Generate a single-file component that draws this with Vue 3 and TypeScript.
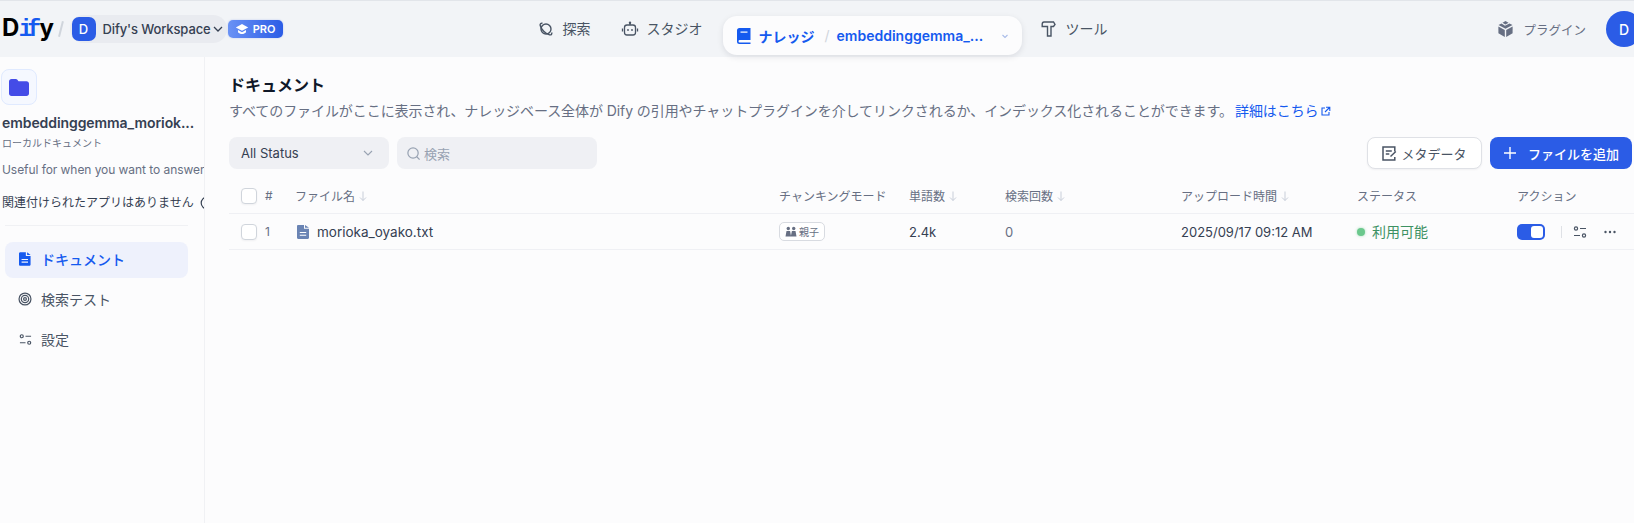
<script setup lang="ts">
interface Col { label: string; sort: boolean; width: number }
const columns: Col[] = [
  { label: 'チャンキングモード', sort: false, width: 130 },
  { label: '単語数', sort: true, width: 96 },
  { label: '検索回数', sort: true, width: 176 },
  { label: 'アップロード時間', sort: true, width: 176 },
  { label: 'ステータス', sort: false, width: 160 },
  { label: 'アクション', sort: false, width: 117 },
]
</script>

<template>
  <div class="page">
    <header class="top">
      <div class="left">
        <div class="logo">D<span class="if">if</span>y</div>
        <span class="slash"></span>
        <div class="ws">
          <span class="ws-av">D</span>
          <span class="ws-name">Dify's Workspace</span>
          <svg class="ws-chev" width="14" height="14" viewBox="0 0 14 14" fill="none"><path d="M3 5l4 4 4-4" stroke="#354052" stroke-width="1.3"/></svg>
        </div>
        <div class="pro">
          <svg width="14" height="14" viewBox="0 0 14 14" fill="#fff"><path d="M7 2 .8 5.4 7 8.8l6.2-3.4z"/><path d="M3 8v2.2C4 11.4 5.5 12 7 12s3-.6 4-1.8V8L7 10.2z"/></svg>
          <span>PRO</span>
        </div>
      </div>

      <nav class="nav">
        <a class="nav-item">
          <svg width="16" height="16" viewBox="0 0 16 16" fill="none" stroke="#495464" stroke-width="1.400"><circle cx="8" cy="8" r="5"/><path d="M4.500 2.300C2.800 2 1.800 2.800 2.200 4.500c.8 3.600 5.500 8.500 9.300 9.300 1.800.3 2.600-.6 2.200-2.300"/></svg>
          探索
        </a>
        <a class="nav-item studio">
          <svg width="18" height="18" viewBox="0 0 18 18" fill="none" stroke="#495464" stroke-width="1.3"><rect x="3.500" y="5" width="11" height="10" rx="2.500"/><circle cx="9" cy="2.800" r="1.200" fill="#495464" stroke="none"/><path d="M9 3v2M1.500 8.500v3M16.500 8.500v3"/><circle cx="7" cy="10" r=".9" fill="#495464" stroke="none"/><circle cx="11" cy="10" r=".9" fill="#495464" stroke="none"/></svg>
          スタジオ
        </a>
        <div class="pill">
          <svg width="14" height="16" viewBox="0 0 14 16" fill="#155aef"><path d="M2.500 0H13.500V12H2.800a1.300 1.300 0 0 0 0 2.600H13.500V16H2.500A2.500 2.500 0 0 1 0 13.500V2.500A2.500 2.500 0 0 1 2.500 0z"/><path d="M3.500 3.500h7v1.200h-7z" fill="#fff"/></svg>
          <span class="pill-a">ナレッジ</span>
          <span class="pill-s">/</span>
          <span class="pill-b">embeddinggemma_...</span>
          <svg class="pill-chev" width="12" height="12" viewBox="0 0 12 12" fill="none"><path d="M3.500 5l2.500 2.500L8.500 5" stroke="#a9bce8" stroke-width="1.100"/></svg>
        </div>
        <a class="nav-item tool">
          <svg width="15" height="16" viewBox="0 0 15 16" fill="none" stroke="#495464" stroke-width="1.400"><path d="M3 1h9.500l1.500 2.500L12.500 5.500H10V15H6.500V5.500H1.200V3.200C1.200 2 2 1 3 1z"/></svg>
          ツール
        </a>
      </nav>

      <div class="right">
        <a class="plugin">
          <svg width="15" height="16" viewBox="0 0 15 16" fill="#676f83"><path d="M7.500 0 10.500 1.700 7.500 3.400 4.500 1.700z"/><path d="M.5 4 3.500 2.500 7 4.800 11.500 2.500 14.500 4 7.500 7.800z"/><path d="M.4 5.500 6.800 9V16L.4 12.300z"/><path d="M14.600 5.500 8.200 9V16l6.400-3.700z"/></svg>
          プラグイン
        </a>
        <span class="avatar">D</span>
      </div>
    </header>

    <div class="body">
      <aside class="side">
        <div class="side-head">
          <div class="folder">
            <svg width="20" height="17" viewBox="0 0 20 17" fill="#444ce7"><path d="M2.500 0h4.300c.7 0 1.200.3 1.600.8L9.500 2.200h8c1.400 0 2.500 1.100 2.500 2.500v9.800c0 1.400-1.100 2.500-2.500 2.500h-15C1.100 17 0 15.900 0 14.500v-12C0 1.100 1.100 0 2.500 0z"/></svg>
          </div>
          <div class="ds-name">embeddinggemma_moriok...</div>
          <div class="ds-type">ローカルドキュメント</div>
          <div class="ds-desc">Useful for when you want to answer</div>
          <div class="ds-apps">
            <span>関連付けられたアプリはありません</span>
            <svg width="14" height="14" viewBox="0 0 14 14" fill="none" stroke="#354052" stroke-width="1.200"><circle cx="7" cy="7" r="5.800"/><path d="M7 6.300v3.500M7 4v.9"/></svg>
          </div>
        </div>
        <div class="side-div"></div>
        <a class="s-item active">
          <span class="s-ic"><svg width="12" height="14" viewBox="0 0 14 16" fill="#155aef"><path d="M1.500 0H8v4.500h5.500V14.500c0 .8-.7 1.500-1.500 1.500H1.500C.7 16 0 15.300 0 14.500v-13C0 .7.700 0 1.500 0z"/><path d="M9.500 0l4 3.200h-4z"/><path d="M3 8h7.500v1.300H3zM3 11h7.500v1.300H3z" fill="#eef1fc"/></svg></span>
          ドキュメント
        </a>
        <a class="s-item">
          <span class="s-ic"><svg width="14" height="14" viewBox="0 0 16 16" fill="none" stroke="#495464" stroke-width="1.400"><circle cx="8" cy="8" r="6.800"/><circle cx="8" cy="8" r="4.200"/><circle cx="8" cy="8" r="1.600"/></svg></span>
          検索テスト
        </a>
        <a class="s-item">
          <span class="s-ic"><svg width="13" height="13" viewBox="0 0 14 14" fill="none" stroke="#495464" stroke-width="1.300"><circle cx="3" cy="3.500" r="1.600"/><path d="M7 3.500h6M1 10.500h6"/><circle cx="11" cy="10.500" r="1.600"/></svg></span>
          設定
        </a>
      </aside>

      <main class="main">
        <h1 class="title">ドキュメント</h1>
        <p class="desc">すべてのファイルがここに表示され、ナレッジベース全体が Dify の引用やチャットプラグインを介してリンクされるか、インデックス化されることができます。<a class="more">詳細はこちら<svg width="11" height="11" viewBox="0 0 11 11" fill="none" stroke="#155aef" stroke-width="1.100"><path d="M5 2H2v7h7V6M6 1.200h3.800V5M9.500 1.500 5 6"/></svg></a></p>

        <div class="bar">
          <div class="select">
            <span>All Status</span>
            <svg width="14" height="14" viewBox="0 0 14 14" fill="none"><path d="M3 5l4 4 4-4" stroke="#98a2b2" stroke-width="1.100"/></svg>
          </div>
          <div class="search">
            <svg width="15" height="15" viewBox="0 0 16 16" fill="none" stroke="#98a2b2" stroke-width="1.300"><circle cx="7.500" cy="7.500" r="5.500"/><path d="M11.500 11.500 14.500 14.500"/></svg>
            <span>検索</span>
          </div>
          <div class="spacer"></div>
          <button class="btn meta">
            <svg width="15" height="15" viewBox="0 0 15 15" fill="none" stroke="#495464" stroke-width="1.500"><path d="M12.800 5.500V1H1v13h11.800v-3"/><path d="M3.800 5h6M3.800 8h3.500"/><path d="M8.500 10.500 13.800 5.500"/></svg>
            メタデータ
          </button>
          <button class="btn add">
            <svg width="14" height="14" viewBox="0 0 14 14" fill="none" stroke="#fff" stroke-width="1.400"><path d="M7 1v12M1 7h12"/></svg>
            ファイルを追加
          </button>
        </div>

        <div class="thead">
          <span class="cell-check"><i class="check"></i></span>
          <span class="cell-num">#</span>
          <span class="cell-name">ファイル名<svg class="arrow" width="12" height="12" viewBox="0 0 12 12" fill="none" stroke="#c8ced9" stroke-width="1"><path d="M6 1.500v9M3 7.500l3 3 3-3"/></svg></span>
          <span v-for="c in columns" :key="c.label" class="cell" :style="{ width: c.width + 'px' }">
            {{ c.label }}
            <svg v-if="c.sort" class="arrow" width="12" height="12" viewBox="0 0 12 12" fill="none" stroke="#c8ced9" stroke-width="1"><path d="M6 1.500v9M3 7.500l3 3 3-3"/></svg>
          </span>
        </div>

        <div class="row">
          <span class="cell-check"><i class="check"></i></span>
          <span class="cell-num">1</span>
          <span class="cell-name file">
            <svg width="12" height="14" viewBox="0 0 12 14" fill="#6a84b4"><path d="M1.200 0H7v3.800h5v9c0 .7-.5 1.200-1.200 1.200H1.200C.5 14 0 13.500 0 12.800V1.200C0 .5.500 0 1.200 0z"/><path d="M8 0l4 2.800H8z"/><path d="M2.800 7h6.400v1H2.800zM2.800 9.800h6.400v1H2.800z" fill="#fff"/></svg>
            morioka_oyako.txt
          </span>
          <span class="cell" :style="{ width: columns[0].width + 'px' }">
            <span class="chip">
              <svg width="12" height="12" viewBox="0 0 12 12" fill="#676f83"><circle cx="3.300" cy="2.500" r="1.700"/><circle cx="8.700" cy="2.500" r="1.700"/><path d="M.5 10.500 1.500 5h3.600l1 5.500zM5.800 10.500 6.900 5h3.600l1 5.500z"/></svg>
              親子
            </span>
          </span>
          <span class="cell val" :style="{ width: columns[1].width + 'px' }">2.4k</span>
          <span class="cell val muted" :style="{ width: columns[2].width + 'px' }">0</span>
          <span class="cell val" :style="{ width: columns[3].width + 'px' }">2025/09/17 09:12 AM</span>
          <span class="cell status" :style="{ width: columns[4].width + 'px' }"><i class="dot"></i><b>利用可能</b></span>
          <span class="cell actions" :style="{ width: columns[5].width + 'px' }">
            <span class="switch"><i></i></span>
            <span class="vline"></span>
            <svg width="14" height="14" viewBox="0 0 14 14" fill="none" stroke="#495464" stroke-width="1.200"><circle cx="3" cy="3.500" r="1.600"/><path d="M7 3.500h6M1 10.500h6"/><circle cx="11" cy="10.500" r="1.600"/></svg>
            <svg class="more-ic" width="14" height="14" viewBox="0 0 14 14" fill="#495464"><circle cx="2.500" cy="7" r="1.200"/><circle cx="7" cy="7" r="1.200"/><circle cx="11.500" cy="7" r="1.200"/></svg>
          </span>
        </div>
      </main>
    </div>
  </div>
</template>

<style>
html, body { margin: 0; overflow: hidden; background: #fcfcfd; }
</style>

<style scoped>
.page {
  width: 1634px; height: 523px; overflow: hidden; display: flex; flex-direction: column;
  font-family: Inter, "Noto Sans CJK JP", sans-serif; color: #354052; background: #fcfcfd;
  font-size: 14px;
}
svg { flex-shrink: 0; }
.top {
  height: 56px; flex-shrink: 0; background: #f2f4f7; border-top: 1px solid #e2e5ea;
  display: grid; grid-template-columns: 1fr auto 1fr; align-items: center;
}
.left { display: flex; align-items: center; padding-left: 2px; }
.logo { font: 700 24px/1 Inter, sans-serif; color: #000; width: 50px; white-space: nowrap; letter-spacing: -.5px; }
.if { color: #155aef; font-family: "Liberation Mono", monospace; font-size: 23px; font-weight: 700; letter-spacing: -5.5px; margin-right: 4px; }
.slash { width: 1.500px; height: 16px; background: #d0d5dc; transform: rotate(14deg); margin: 0 8px; flex-shrink: 0; }
.ws { display: flex; align-items: center; height: 28px; border-radius: 14px; background: #e9ebf0; padding: 0 2px; margin-right: 1px; width: 157px; box-sizing: border-box; flex-shrink: 0; }
.ws-av { width: 24px; height: 24px; flex-shrink: 0; border-radius: 7px; background: #2b5ce6; color: #fff; font-size: 13px; font-weight: 500; display: flex; align-items: center; justify-content: center; margin-right: 7px; }
.ws-name { font-size: 13px; font-weight: 500; color: #354052; white-space: nowrap; letter-spacing: -.12px; }
.pro {
  width: 55px; height: 18px; border-radius: 5px; background: linear-gradient(90deg, #6a92f5, #2b5ce6);
  color: #fff; display: flex; align-items: center; justify-content: center; gap: 4px; font-size: 11px; font-weight: 600;
  box-shadow: 0 0 2px rgba(43, 92, 230, .3); flex-shrink: 0;
}
.nav { display: flex; align-items: center; height: 100%; margin-left: 11px; }
.nav-item { display: flex; align-items: center; gap: 9px; color: #495464; font-size: 14px; line-height: 20px; white-space: nowrap; margin-top: -1px; }
.studio { margin-left: 30px; margin-right: 20px; gap: 8px; }
.tool { margin-left: 19px; gap: 10px; }
.pill {
  display: flex; align-items: center; width: 299px; box-sizing: border-box; height: 39px; margin-top: 12px; margin-bottom: -1px;
  padding-left: 14px; border-radius: 14px; background: #fcfcfd; box-shadow: 0 2px 6px rgba(16, 24, 40, .1);
  font-weight: 600; color: #155aef; font-size: 14px; white-space: nowrap;
}
.pill-a { margin-left: 8px; }
.pill-s { color: #d0d5dc; margin: 0 7px 0 10px; font-weight: 400; }
.pill-b { width: 148px; }
.pill-chev { margin-left: 14px; }
.right { display: flex; align-items: center; justify-content: flex-end; }
.plugin { display: flex; align-items: center; gap: 10px; font-size: 12.500px; color: #676f83; white-space: nowrap; margin-right: 20px; }
.avatar { width: 36px; height: 36px; border-radius: 50%; background: #2b5ce6; color: #fff; font-weight: 500; display: flex; align-items: center; justify-content: center; margin-right: -8px; flex-shrink: 0; }

.body { flex: 1; display: flex; min-height: 0; }
.side { width: 205px; box-sizing: border-box; border-right: 1px solid #f0f1f4; flex-shrink: 0; overflow: hidden; padding-top: 12px; }
.side-head { padding-left: 2px; white-space: nowrap; }
.folder { width: 34px; height: 34px; margin-left: -1px; border: 1px solid #e0eaff; border-radius: 8px; background: #f5f8ff; display: flex; align-items: center; justify-content: center; }
.ds-name { font-size: 14px; font-weight: 600; color: #354052; margin-top: 8px; line-height: 20px; letter-spacing: -.08px; }
.ds-type { font-size: 10px; color: #676f83; line-height: 14px; margin-top: 3px; }
.ds-desc { font-size: 12px; color: #676f83; line-height: 18px; margin-top: 11px; letter-spacing: -.06px; }
.ds-apps { font-size: 12px; color: #354052; display: flex; align-items: center; gap: 6px; margin-top: 14px; line-height: 20px; }
.side-div { height: 1px; background: #f0f1f4; margin: 12px 16px 16px 5px; }
.s-item { display: flex; align-items: center; box-sizing: border-box; height: 36px; margin: 0 16px 4px 5px; padding: 0 0 2px 13px; gap: 9px; border-radius: 8px; color: #495464; font-size: 14px; }
.s-ic { width: 14px; display: flex; justify-content: center; }
.s-item.active { background: #eef1fc; color: #155aef; font-weight: 500; }

.main { flex: 1; min-width: 0; padding: 16px 0 0 24px; }
.title { margin: 0; font-size: 16px; line-height: 24px; font-weight: 700; color: #101828; }
.desc { margin: 3px 0 0; font-size: 14px; line-height: 22px; color: #676f83; white-space: nowrap; letter-spacing: -.075px; }
.more { color: #155aef; margin-left: 2px; }
.more svg { margin-left: 1px; vertical-align: -1px; }
.bar { display: flex; align-items: center; gap: 8px; margin-top: 15px; height: 32px; }
.spacer { flex: 1; }
.select { width: 160px; height: 32px; box-sizing: border-box; padding: 0 14px 0 12px; border-radius: 8px; background: #eff0f4; display: flex; align-items: center; justify-content: space-between; font-size: 13px; color: #354052; }
.search { width: 200px; height: 32px; box-sizing: border-box; padding-left: 9px; border-radius: 8px; background: #eff0f4; display: flex; align-items: center; gap: 3px; font-size: 13px; color: #98a2b2; }
.btn { height: 32px; border-radius: 8px; display: flex; align-items: center; font: inherit; font-size: 13px; box-sizing: border-box; white-space: nowrap; padding: 0; }
.meta { width: 115px; justify-content: center; gap: 4px; background: #fff; border: 1px solid #dfe1e6; color: #495464; box-shadow: 0 1px 2px rgba(16, 24, 40, .05); }
.add { width: 142px; margin-right: 2px; justify-content: center; gap: 11px; background: #2b5ce6; border: none; color: #fff; font-weight: 500; }

.thead, .row { display: flex; align-items: center; white-space: nowrap; border-bottom: 1px solid #eff0f4; }
.thead { height: 35px; margin-top: 9px; font-size: 12px; color: #676f83; }
.row { height: 35px; font-size: 14px; color: #354052; }
.cell-check { width: 36px; padding-left: 12px; box-sizing: border-box; display: flex; }
.check { width: 16px; height: 16px; box-sizing: border-box; border: 1px solid #d0d5dc; border-radius: 4px; background: #fff; box-shadow: 0 1px 2px rgba(16, 24, 40, .05); }
.cell-num { width: 30px; color: #676f83; font-size: 12px; }
.cell-name { width: 484px; display: flex; align-items: center; }
.file { gap: 8px; padding-left: 2px; box-sizing: border-box; font-size: 13.500px; }
.cell { display: flex; align-items: center; flex-shrink: 0; }
.arrow { margin-left: 2px; }
.chip { display: flex; align-items: center; gap: 2px; height: 19px; width: 46px; box-sizing: border-box; padding-left: 5px; border: 1px solid #d8dbe1; border-radius: 5px; font-size: 10px; color: #676f83; background: #fff; }
.muted { color: #676f83; }
.val { font-size: 13px; }
.status { color: #3d9163; font-size: 14px; gap: 7px; }
.status b { font-weight: 400; margin-top: -2px; }
.dot { width: 8px; height: 8px; border-radius: 50%; background: #6bc88d; box-shadow: 0 0 3px rgba(107, 200, 141, .6); }
.switch { width: 28px; height: 16px; border-radius: 5px; background: #2b5ce6; position: relative; display: block; }
.switch i { position: absolute; right: 2px; top: 2px; width: 12px; height: 12px; border-radius: 3px; background: #fff; }
.vline { width: 1px; height: 12px; background: #dfe1e6; margin: 0 11px 0 16px; }
.more-ic { margin-left: 16px; }
</style>
